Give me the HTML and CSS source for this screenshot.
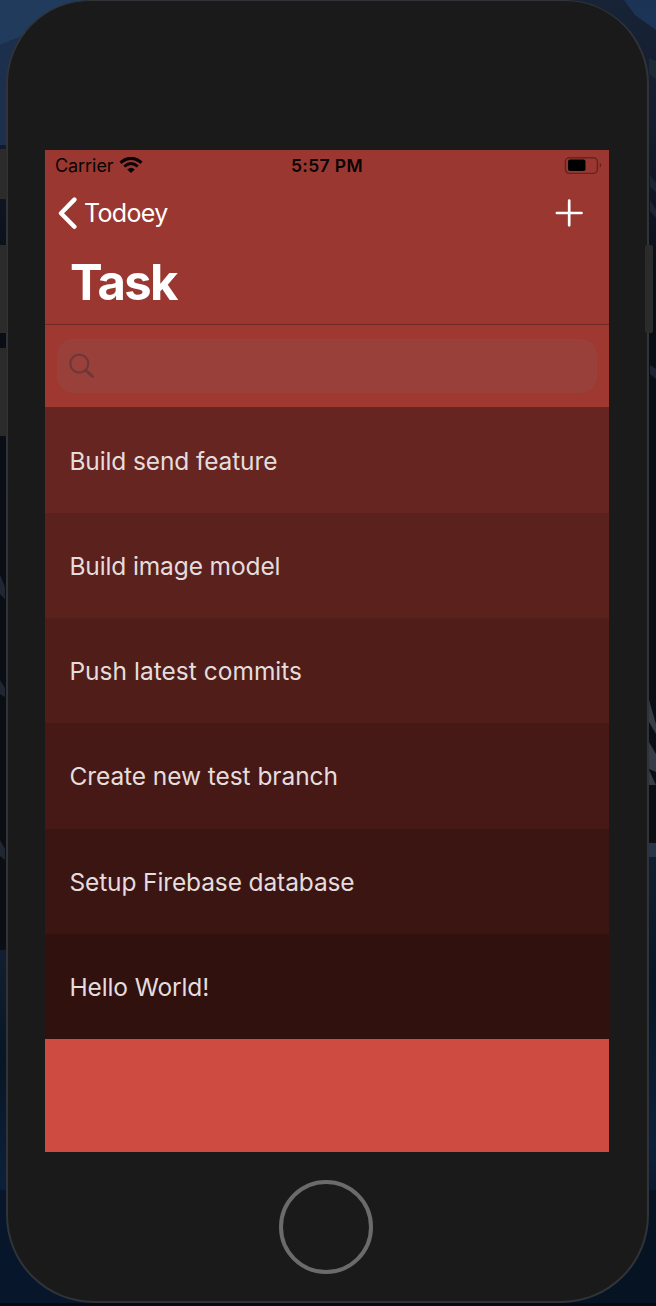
FILE: index.html
```html
<!DOCTYPE html>
<html lang="en">
<head>
<meta charset="utf-8">
<title>Todoey</title>
<link rel="stylesheet" href="styles.css">
</head>
<body>
<div class="desktop">
  <svg class="wallpaper" width="656" height="1306" viewBox="0 0 656 1306" aria-hidden="true">
    <defs>
      <linearGradient id="sky" x1="0" y1="0" x2="0" y2="1"><stop offset="0" stop-color="#1b3354"/><stop offset="1" stop-color="#223e63"/></linearGradient>
      <linearGradient id="rock" x1="0" y1="0" x2="0" y2="1"><stop offset="0" stop-color="#172336"/><stop offset=".13" stop-color="#151c2d"/><stop offset=".3" stop-color="#090d16"/><stop offset="1" stop-color="#0c0e13"/></linearGradient>
      <linearGradient id="sea" x1="0" y1="0" x2="0" y2="1"><stop offset="0" stop-color="#121f30"/><stop offset=".3" stop-color="#071625"/><stop offset=".65" stop-color="#0b2039"/><stop offset="1" stop-color="#050e1d"/></linearGradient>
    </defs>
    <rect width="656" height="170" fill="url(#sky)"/>
    <path d="M0 46 24 35 80 8V0H570L624 0 635 15 656 30V950H0Z" fill="url(#rock)"/>
    <path d="M0 0H85L60 17 22 36 0 45Z" fill="#213b5d"/>
    <path d="M0 45 22 36 8 70V145H0Z" fill="#1c2f4c"/>
    <path d="M649 58l7 3v18l-7-5Z" fill="#1d2b35"/>
    <path d="M650 175l6 8v9l-6-5ZM650 200l6 10v8l-6-7ZM650 365l6 4v10l-6-5Z" fill="#1c2433"/>
    <path d="M649 700l7 24v10l-7-12ZM649 742l7 12v18l-7-3ZM649 770l7 15h-7Z" fill="#353c46"/>
    <path d="M0 575l5 12v12l-5-5ZM0 680l5 8v9l-5-3ZM0 840l5 9v11l-5-4Z" fill="#202732"/>
    <rect y="950" width="12" height="356" fill="url(#sea)"/>
    <rect x="645" y="843" width="11" height="463" fill="url(#sea)"/>
    <rect x="648" y="843" width="8" height="14" fill="#25354a"/>
    <path d="M0 1190H12L100 1306H0Z" fill="#07162a"/>
    <path d="M656 1190h-11L560 1306h96Z" fill="#061323"/>
    <rect y="1303" width="656" height="3" fill="#050914"/>
  </svg>
  <i class="side-key mute"></i><i class="side-key volume-up"></i><i class="side-key volume-down"></i>
  <main class="phone">
    <section class="screen">
      <header class="navbar">
        <div class="status">
          <div class="carrier"><span class="carrier-name">Carrier</span>
            <svg class="wifi" width="24" height="18" viewBox="0 0 24 18" fill="none" stroke="#090303"><path d="M1.5 5.7Q12-3.1 22.5 5.7" stroke-width="3.1"/><path d="M5.2 9.5Q12 3.6 18.8 9.5" stroke-width="2.9"/><path d="M8.2 12.4Q12 9.2 15.8 12.4L12 16Z" fill="#090303" stroke="none"/></svg>
          </div>
          <time class="clock">5:57 PM</time>
          <svg class="battery" width="38" height="18" viewBox="0 0 38 18"><rect x="1.4" y=".7" width="32" height="15.7" rx="4" fill="none" stroke="#642421" stroke-width="1.4"/><rect x="4" y="2.6" width="17.5" height="11.4" rx="2" fill="#000"/><path d="M35.8 5.7q1.4.8 1.4 2.5t-1.4 2.5Z" fill="#642421"/></svg>
        </div>
        <div class="actions">
          <a class="back"><svg width="20" height="33" viewBox="0 0 20 33"><path d="M17.4 2.6 4 16.2 17.4 29.8" fill="none" stroke="#fff" stroke-width="4.4" stroke-linecap="round" stroke-linejoin="round"/></svg><span class="back-label">Todoey</span></a>
          <svg class="add" width="28" height="28" viewBox="0 0 28 28"><path d="M14.2 1.7V26.3M1.9 14H26.5" stroke="#fff" stroke-width="2.7" stroke-linecap="round"/></svg>
        </div>
        <h1 class="title">Task</h1>
      </header>
      <div class="search"><div class="field">
        <svg width="27" height="27" viewBox="0 0 27 27" fill="none" stroke="#6e3838" stroke-linecap="round"><circle cx="11.3" cy="10.6" r="9" stroke-width="2.2"/><path d="m18 17.3 6.5 6.2" stroke-width="3"/></svg>
      </div></div>
      <ul class="tasks">
        <li class="task shade-1"><span>Build send feature</span></li>
        <li class="task shade-2"><span>Build image model</span></li>
        <li class="task shade-3"><span>Push latest commits</span></li>
        <li class="task shade-4"><span>Create new test branch</span></li>
        <li class="task shade-5"><span>Setup Firebase database</span></li>
        <li class="task shade-6"><span>Hello World!</span></li>
      </ul>
    </section>
    <div class="home"></div>
  </main>
  <i class="side-key power"></i>
</div>
</body>
</html>
```
FILE: styles.css
```css
* { box-sizing: border-box; }
body { margin: 0; background: #0a101b; font-family: Inter, "Liberation Sans", sans-serif; }
.desktop { position: relative; width: 656px; height: 1306px; overflow: hidden; padding-left: 6px; }
.wallpaper { position: absolute; left: 0; top: 0; }
.phone { position: relative; width: 643px; height: 1303px; border: 2px solid #303338; border-top-width: 1px; border-radius: 84px 84px 88px 88px; background: #1a1a1a; display: flex; flex-direction: column; align-items: center; padding-top: 149px; }
.screen { width: 564px; height: 1002px; margin-right: 1.2px; background: #cd4b41; flex: none; }
.side-key { position: absolute; background: #2b2b2b; z-index: 1; }
.mute { left: 0; top: 149px; width: 7px; height: 50px; }
.volume-up { left: 0; top: 245px; width: 7px; height: 88px; }
.volume-down { left: 0; top: 348px; width: 7px; height: 88px; }
.power { left: 645px; top: 245px; width: 8px; height: 88px; border-radius: 2px; }
.navbar { height: 175px; background: #9a3730; border-bottom: 1px solid #6f2925; }
.status { display: grid; grid-template-columns: 1fr auto 1fr; height: 30px; padding: 0 7px 0 10px; align-items: center; color: #090303; line-height: 32px; }
.carrier { display: flex; align-items: center; gap: 5px; font-size: 18px; }
.carrier-name { letter-spacing: -.05px; }
.clock { font-size: 17.5px; font-weight: 600; letter-spacing: .35px; margin-right: 3px; }
.battery { justify-self: end; }
.actions { display: flex; justify-content: space-between; align-items: center; height: 66px; padding: 0 26px 0 12px; }
.back { display: flex; align-items: center; gap: 7px; color: #fff; font-size: 25px; }
.back-label { letter-spacing: -.65px; }
.title { margin: 0; padding-left: 25px; color: #fff; font-size: 49px; line-height: 74px; font-weight: 700; letter-spacing: -1.6px; }
.search { height: 82px; padding: 14px 12px; background: #9e3831; }
.field { height: 54px; border-radius: 16px; background: #984039; padding: 14px 11px; }
.field svg { display: block; }
.tasks { margin: 0; padding: 0; list-style: none; height: 632px; display: grid; grid-template-rows: 106px repeat(5, 1fr); }
.task { display: flex; align-items: center; padding: 1px 24.5px 0; color: #e5dddd; font-size: 24.5px; letter-spacing: -.12px; }
.shade-1 { background: #672521; padding-top: 2px; }
.shade-2 { background: #5b211d; }
.shade-3 { background: #501d19; letter-spacing: .02px; }
.shade-4 { background: #461916; letter-spacing: -.07px; }
.shade-5 { background: #3b1512; padding-top: 2px; }
.shade-6 { background: #30110e; padding-top: 2px; }
.home { width: 94px; height: 94px; margin-top: 28px; margin-right: 3px; border: 4px solid #6b6b6b; border-radius: 50%; flex: none; }
```
